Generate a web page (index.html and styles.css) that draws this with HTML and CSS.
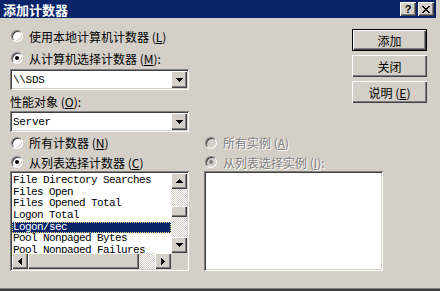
FILE: index.html
```html
<!DOCTYPE html>
<html lang="zh-CN">
<head>
    <meta charset="UTF-8">
    <title>添加计数器</title>
    <link rel="stylesheet" href="styles.css">
</head>
<body>
    <div class="window">
        <div class="titlebar">
            <span class="title">添加计数器</span>
            <div class="caption-buttons">
                <span class="cap-btn help">?</span>
                <span class="cap-btn">
                    <svg width="8" height="7" viewBox="0 0 8 7"><path d="M0 0h2v1h1v1h2V1h1V0h2v1H7v1H6v1H5v1h1v1h1v1h1v1H6V6H5V5H3v1H2v1H0V6h1V5h1V4h1V3H2V2H1V1H0z" fill="#000"/></svg>
                </span>
            </div>
        </div>

        <div class="content">
            <div class="top">
                <div class="machine">
                    <div class="radio"><span class="dot"></span>使用本地计算机计数器 (<u>L</u>)</div>
                    <div class="radio"><span class="dot on"></span>从计算机选择计数器 (<u>M</u>):</div>
                    <div class="combo">
                        <span class="combo-text">\\SDS</span>
                        <span class="drop"><svg width="7" height="4" viewBox="0 0 7 4"><path d="M0 0h7v1H0zM1 1h5v1H1zM2 2h3v1H2zM3 3h1v1H3z"/></svg></span>
                    </div>
                    <div class="label">性能对象 (<u>O</u>):</div>
                    <div class="combo">
                        <span class="combo-text">Server</span>
                        <span class="drop"><svg width="7" height="4" viewBox="0 0 7 4"><path d="M0 0h7v1H0zM1 1h5v1H1zM2 2h3v1H2zM3 3h1v1H3z"/></svg></span>
                    </div>
                </div>
                <div class="buttons">
                    <button class="btn default">添加</button>
                    <button class="btn">关闭</button>
                    <button class="btn">说明 (<u>E</u>)</button>
                </div>
            </div>

            <div class="bottom">
                <div class="pane">
                    <div class="radio first"><span class="dot"></span>所有计数器 (<u>N</u>)</div>
                    <div class="radio second"><span class="dot on"></span>从列表选择计数器 (<u>C</u>)</div>
                    <div class="listbox">
                        <div class="list-main">
                            <ul class="items">
                                <li>File Directory Searches</li>
                                <li>Files Open</li>
                                <li>Files Opened Total</li>
                                <li>Logon Total</li>
                                <li class="selected">Logon/sec</li>
                                <li>Pool Nonpaged Bytes</li>
                                <li>Pool Nonpaged Failures</li>
                            </ul>
                            <div class="vscroll">
                                <span class="arrow"><svg width="7" height="4" viewBox="0 0 7 4"><path d="M3 0h1v1H3zM2 1h3v1H2zM1 2h5v1H1zM0 3h7v1H0z"/></svg></span>
                                <div class="track vtrack"><span class="thumb"></span></div>
                                <span class="arrow"><svg width="7" height="4" viewBox="0 0 7 4"><path d="M0 0h7v1H0zM1 1h5v1H1zM2 2h3v1H2zM3 3h1v1H3z"/></svg></span>
                            </div>
                        </div>
                        <div class="hrow">
                            <span class="arrow"><svg width="4" height="7" viewBox="0 0 4 7"><path d="M0 3h1v1H0zM1 2h1v3H1zM2 1h1v5H2zM3 0h1v7H3z"/></svg></span>
                            <div class="track htrack"><span class="thumb"></span></div>
                            <span class="arrow"><svg width="4" height="7" viewBox="0 0 4 7"><path d="M0 0h1v7H0zM1 1h1v5H1zM2 2h1v3H2zM3 3h1v1H3z"/></svg></span>
                            <span class="corner"></span>
                        </div>
                    </div>
                </div>

                <div class="pane disabled">
                    <div class="radio first"><span class="dot"></span>所有实例 (<u>A</u>)</div>
                    <div class="radio second"><span class="dot on"></span>从列表选择实例 (<u>I</u>):</div>
                    <div class="listbox"></div>
                </div>
            </div>
        </div>
    </div>
</body>
</html>
```

FILE: styles.css
```css
body {
    margin: 0;
    background: #d4d0c8;
    font-family: "Noto Sans CJK SC", sans-serif;
    font-size: 12px;
    color: #000;
}
.window {
    width: 440px;
    height: 291px;
    box-sizing: border-box;
    background: #d4d0c8;
    box-shadow: inset 0 -2px #404040, inset 0 -3px #808080;
}
.titlebar {
    height: 18px;
    margin-right: 4px;
    padding: 0 2px 0 3px;
    background: #0a246a;
    display: flex;
    align-items: center;
    justify-content: space-between;
}
.title {
    color: #fff;
    font-weight: bold;
    font-size: 13px;
}
.caption-buttons {
    display: flex;
    gap: 2px;
}
.cap-btn {
    width: 16px;
    height: 14px;
    box-sizing: border-box;
    background: #d4d0c8;
    box-shadow: inset 1px 1px #fff, inset -1px -1px #404040, inset -2px -2px #808080;
    display: flex;
    align-items: center;
    justify-content: center;
}
.help {
    font-family: "Liberation Sans", sans-serif;
    font-weight: bold;
    font-size: 11px;
    line-height: 14px;
}
.content {
    padding-left: 10px;
}
.top {
    display: flex;
    justify-content: space-between;
    padding-right: 13px;
}
.machine {
    width: 179px;
    padding-top: 7px;
}
.radio {
    height: 22px;
    display: flex;
    align-items: center;
    white-space: nowrap;
}
.radio.first {
    height: 21px;
}
.radio.second {
    height: 18px;
}
.dot {
    position: relative;
    width: 12px;
    height: 12px;
    box-sizing: border-box;
    margin: 0 6px 0 1px;
    border-radius: 50%;
    background: #fff;
    border: 1px solid;
    border-color: #808080 #fff #fff #808080;
    box-shadow: inset 1px 1px #404040, inset -1px -1px #d4d0c8;
}
.dot.on::after {
    content: "";
    position: absolute;
    left: 3px;
    top: 3px;
    width: 4px;
    height: 4px;
    border-radius: 50%;
    background: #000;
}
.combo {
    height: 21px;
    box-sizing: border-box;
    padding: 2px;
    background: #fff;
    box-shadow: inset 1px 1px #808080, inset -1px -1px #fff, inset 2px 2px #404040, inset -2px -2px #d4d0c8;
    display: flex;
    align-items: center;
    justify-content: space-between;
}
.combo-text {
    padding-left: 1px;
    font-family: "Liberation Mono", monospace;
    font-size: 11px;
    letter-spacing: -0.3px;
}
.drop, .arrow {
    width: 16px;
    height: 16px;
    box-sizing: border-box;
    background: #d4d0c8;
    box-shadow: inset 1px 1px #fff, inset -1px -1px #404040, inset -2px -2px #808080;
    display: flex;
    align-items: center;
    justify-content: center;
    flex: none;
}
.drop {
    height: 17px;
}
.label {
    height: 21px;
    box-sizing: border-box;
    padding-top: 2px;
    display: flex;
    align-items: center;
}
.buttons {
    padding-top: 11px;
    display: flex;
    flex-direction: column;
    gap: 4px;
}
.btn {
    width: 75px;
    height: 22px;
    box-sizing: border-box;
    padding: 0;
    border: none;
    background: #d4d0c8;
    font: inherit;
    color: #000;
    box-shadow: inset 1px 1px #fff, inset -1px -1px #404040, inset -2px -2px #808080;
}
.btn.default {
    border: 1px solid #000;
}
.bottom {
    display: flex;
    gap: 15px;
}
.pane {
    width: 179px;
}
.listbox {
    height: 100px;
    box-sizing: border-box;
    padding: 2px;
    background: #fff;
    box-shadow: inset 1px 1px #808080, inset -1px -1px #fff, inset 2px 2px #404040, inset -2px -2px #d4d0c8;
    display: flex;
    flex-direction: column;
}
.list-main {
    height: 80px;
    display: flex;
}
.items {
    flex: 1;
    margin: 0;
    padding: 2px 0 0;
    list-style: none;
    overflow: hidden;
    font-family: "Liberation Mono", monospace;
    font-size: 11px;
    letter-spacing: -0.6px;
}
.items li {
    height: 11.67px;
    line-height: 11.67px;
    padding-left: 1px;
    white-space: nowrap;
}
.items .selected {
    background: #0a246a;
    color: #fff;
    outline: 1px dotted #e8e080;
    outline-offset: -1px;
}
.vscroll {
    width: 16px;
    display: flex;
    flex-direction: column;
}
.track {
    flex: 1;
    display: flex;
    background: repeating-conic-gradient(#fff 0 25%, #d4d0c8 0 50%) 0 0 / 2px 2px;
}
.vtrack {
    flex-direction: column;
}
.thumb {
    background: #d4d0c8;
    box-shadow: inset 1px 1px #fff, inset -1px -1px #404040, inset -2px -2px #808080;
}
.vtrack .thumb {
    margin-top: 17px;
    height: 11px;
}
.htrack .thumb {
    width: 111px;
}
.hrow {
    height: 16px;
    display: flex;
}
.corner {
    width: 16px;
    background: #d4d0c8;
}
.disabled .radio {
    color: #808080;
    text-shadow: 1px 1px #fff;
}
.disabled .dot {
    background: #d4d0c8;
}
.disabled .dot.on::after {
    background: #808080;
}
```
